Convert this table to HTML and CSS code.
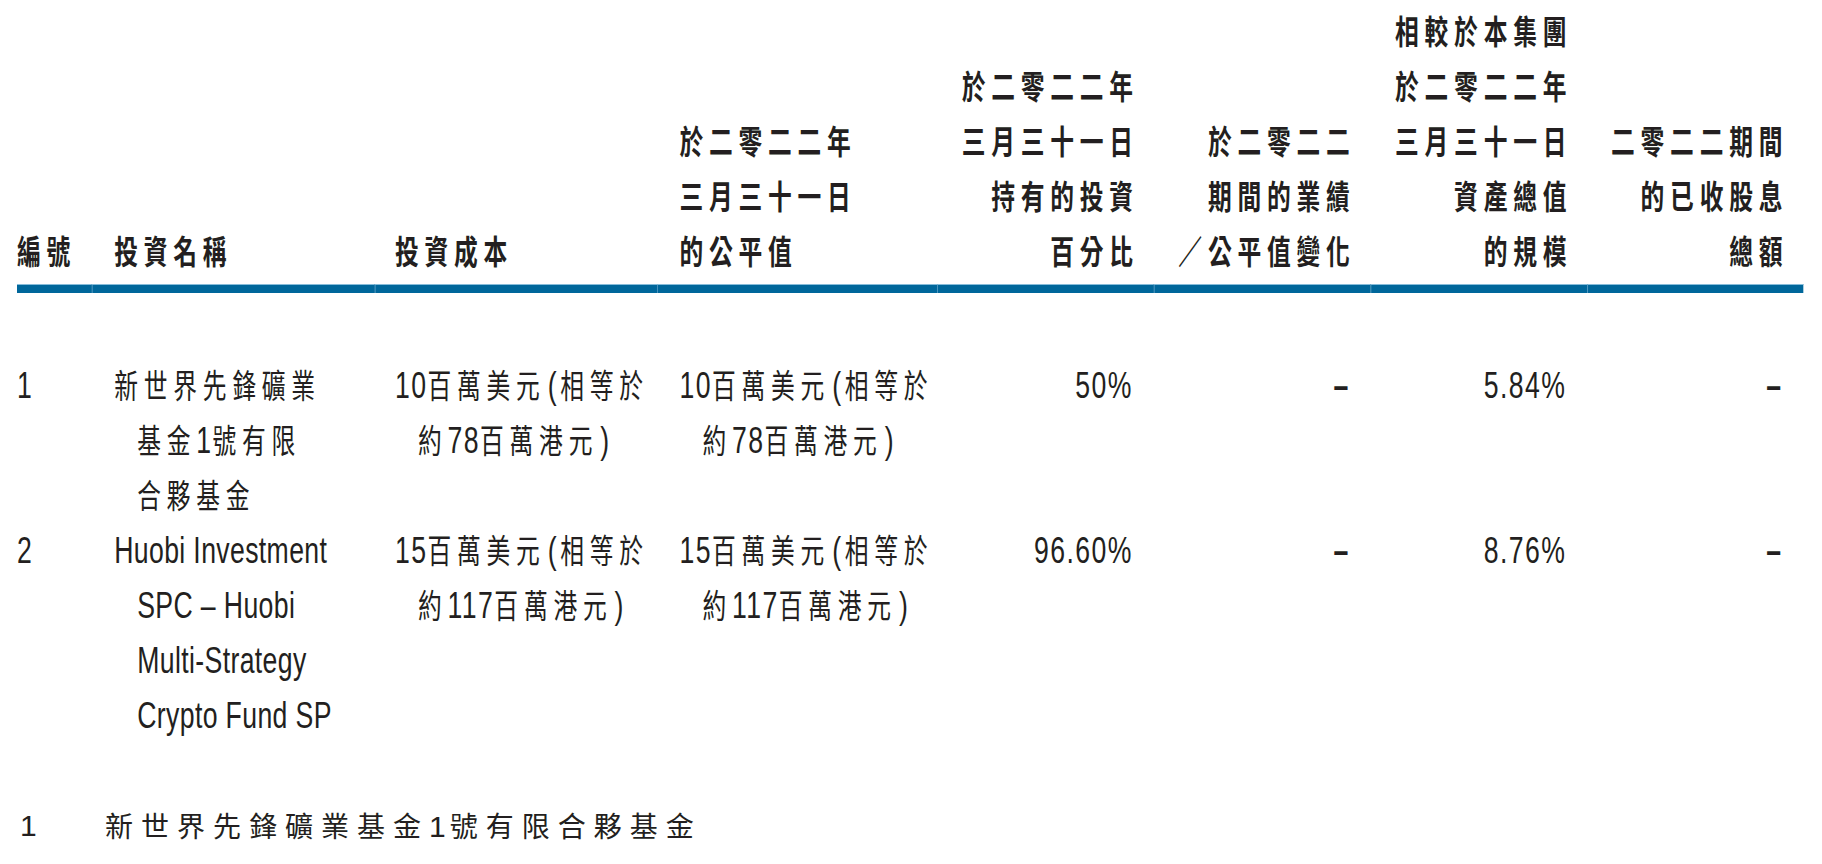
FILE: index.html
```html
<!DOCTYPE html>
<html lang="zh-Hant">
<head>
<meta charset="utf-8">
<title>投資</title>
<link rel="stylesheet" href="styles.css">
</head>
<body>
<main class="page">
  <div class="sheet">
    <div class="table">
      <div class="th c1"><div class="ln">編號</div></div>
      <div class="th c2"><div class="ln">投資名稱</div></div>
      <div class="th c3"><div class="ln">投資成本</div></div>
      <div class="th c4"><div class="ln">於二零二二年</div><div class="ln">三月三十一日</div><div class="ln">的公平值</div></div>
      <div class="th r"><div class="ln">於二零二二年</div><div class="ln">三月三十一日</div><div class="ln">持有的投資</div><div class="ln">百分比</div></div>
      <div class="th r"><div class="ln">於二零二二</div><div class="ln">期間的業績</div><div class="ln">／公平值變化</div></div>
      <div class="th r"><div class="ln">相較於本集團</div><div class="ln">於二零二二年</div><div class="ln">三月三十一日</div><div class="ln">資產總值</div><div class="ln">的規模</div></div>
      <div class="th r"><div class="ln">二零二二期間</div><div class="ln">的已收股息</div><div class="ln">總額</div></div>

      <div class="rule"></div><div class="rule"></div><div class="rule"></div><div class="rule"></div>
      <div class="rule"></div><div class="rule"></div><div class="rule"></div><div class="rule"></div>

      <div class="td c1"><div class="ln"><span class="l">1</span></div></div>
      <div class="td c2"><div class="ln">新世界先鋒礦業</div><div class="ln in">基金<span class="l">1</span>號有限</div><div class="ln in">合夥基金</div></div>
      <div class="td c3"><div class="ln"><span class="l">10</span>百萬美元<span class="l p">(</span>相等於</div><div class="ln in">約<span class="l">78</span>百萬港元<span class="l p">)</span></div></div>
      <div class="td c4"><div class="ln"><span class="l">10</span>百萬美元<span class="l p">(</span>相等於</div><div class="ln in">約<span class="l">78</span>百萬港元<span class="l p">)</span></div></div>
      <div class="td r"><div class="ln"><span class="l">50%</span></div></div>
      <div class="td r"><div class="ln"><span class="l d">–</span></div></div>
      <div class="td r"><div class="ln"><span class="l">5.84%</span></div></div>
      <div class="td r"><div class="ln"><span class="l d">–</span></div></div>

      <div class="td c1"><div class="ln"><span class="l">2</span></div></div>
      <div class="td c2"><div class="ln"><span class="l nm">Huobi Investment</span></div><div class="ln in"><span class="l nm">SPC – Huobi</span></div><div class="ln in"><span class="l nm">Multi-Strategy</span></div><div class="ln in"><span class="l nm">Crypto Fund SP</span></div></div>
      <div class="td c3"><div class="ln"><span class="l">15</span>百萬美元<span class="l p">(</span>相等於</div><div class="ln in">約<span class="l">117</span>百萬港元<span class="l p">)</span></div></div>
      <div class="td c4"><div class="ln"><span class="l">15</span>百萬美元<span class="l p">(</span>相等於</div><div class="ln in">約<span class="l">117</span>百萬港元<span class="l p">)</span></div></div>
      <div class="td r"><div class="ln"><span class="l">96.60%</span></div></div>
      <div class="td r"><div class="ln"><span class="l d">–</span></div></div>
      <div class="td r"><div class="ln"><span class="l">8.76%</span></div></div>
      <div class="td r"><div class="ln"><span class="l d">–</span></div></div>
    </div>
  </div>

  <p class="footnote"><span class="fn-no">1</span><span class="fn-text">新世界先鋒礦業基金<span class="fn-l">1</span>號有限合夥基金</span></p>
</main>
</body>
</html>
```
FILE: styles.css
```css
html, body {
  margin: 0;
  background: #ffffff;
  overflow: hidden;
}

.page {
  padding: 3px 0 0 17px;
  color: #231f20;
  font-family: "Noto Sans CJK TC", sans-serif;
}

/* the printed table uses a condensed face: the whole sheet is drawn narrow */
.sheet {
  width: 2481px;
  transform: scaleX(0.72);
  transform-origin: 0 0;
}

.table {
  display: grid;
  grid-template-columns: 104px 393px 392px 389px 301px 301px 301px 300px;
  font-size: 33px;
  line-height: 55px;
  letter-spacing: 8px;
  white-space: nowrap;
}

.ln {
  height: 55px;
}

.in {
  padding-left: 32px;
}

.l {
  font-family: "Liberation Sans", sans-serif;
  font-size: 37px;
  line-height: 1;
  letter-spacing: 2px;
}

.nm {
  letter-spacing: 0.5px;
}

.p {
  margin: 0 3px;
}

.d {
  font-weight: 700;
}

.th {
  align-self: end;
  padding-bottom: 6px;
  font-weight: 700;
}

.c2, .c4 {
  padding-left: 31px;
}

.c3 {
  padding-left: 28px;
}

.r {
  display: flex;
  flex-direction: column;
  align-items: flex-end;
  text-align: right;
  padding-right: 21px;
}

.td.r {
  padding-right: 29px;
}

.rule {
  height: 8px;
  border-top: 1px solid #86bcda;
  background: #00679b;
  margin-bottom: 64px;
}

.rule + .rule {
  box-shadow: inset 1px 0 0 #5a9fc6;
}

.footnote {
  display: flex;
  margin: 56px 0 0;
  font-size: 28px;
  line-height: 55px;
  letter-spacing: 8px;
  white-space: nowrap;
}

.fn-no {
  width: 85px;
  padding-left: 3px;
  font-family: "Liberation Sans", sans-serif;
  font-size: 30px;
  letter-spacing: 0;
}

.fn-l {
  font-family: "Liberation Sans", sans-serif;
  font-size: 30px;
  line-height: 1;
  letter-spacing: 4px;
}
```
